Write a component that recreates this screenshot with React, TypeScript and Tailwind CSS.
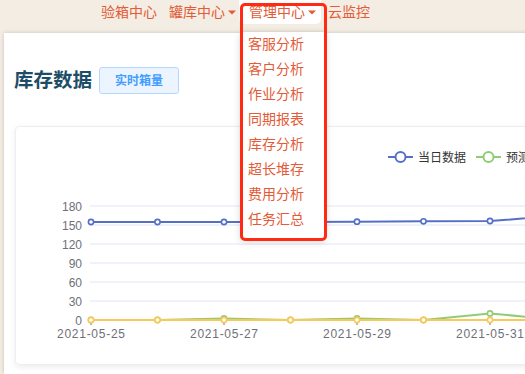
import React from 'react'

const menu = ['客服分析', '客户分析', '作业分析', '同期报表', '库存分析', '超长堆存', '费用分析', '任务汇总']

const xs = [91, 157.5, 224, 290.5, 357, 423.5, 490, 556.5]
const blue = [222, 222, 222, 222, 221.7, 221.3, 221, 216]
const green = [320, 320, 318.5, 320, 318.5, 320, 313.5, 319.5]
const yellow = [320, 320, 320, 320, 320, 320, 320, 320]

const grid = [
  { v: '180', y: 206 },
  { v: '150', y: 225 },
  { v: '120', y: 244 },
  { v: '90', y: 263 },
  { v: '60', y: 282 },
  { v: '30', y: 301 },
  { v: '0', y: 320 },
]

function Caret() {
  return (
    <svg width="8" height="5" viewBox="0 0 8 5" className="ml-[3px]">
      <path d="M0 0.5h8L4 4.5z" fill="currentColor" />
    </svg>
  )
}

function Series({ ys, color }: { ys: number[]; color: string }) {
  const pts = xs.map((x, i) => `${x},${ys[i]}`).join(' ')
  return (
    <g>
      <polyline points={pts} fill="none" stroke={color} strokeWidth={2} />
      {xs.map((x, i) => (
        <circle key={i} cx={x} cy={ys[i]} r={2.6} fill="#fff" stroke={color} strokeWidth={1.6} />
      ))}
    </g>
  )
}

function Chart() {
  return (
    <svg width="560" height="237" viewBox="16 127 560 237" className="block">
      {/* legend */}
      <line x1="388" y1="157" x2="413" y2="157" stroke="#5470c6" strokeWidth={2} />
      <circle cx="400.5" cy="157" r="5" fill="#fff" stroke="#5470c6" strokeWidth={2} />
      <text x="418" y="161.5" fontSize="12" fill="#333">当日数据</text>
      <line x1="476" y1="157" x2="501" y2="157" stroke="#91cc75" strokeWidth={2} />
      <circle cx="488.5" cy="157" r="5" fill="#fff" stroke="#91cc75" strokeWidth={2} />
      <text x="506" y="161.5" fontSize="12" fill="#333">预测数据</text>

      {grid.map((g) => (
        <g key={g.v}>
          <line x1="90" y1={g.y} x2="576" y2={g.y} stroke={g.v === '0' ? '#6e7079' : '#e0e6f1'} strokeWidth={1} />
          <text x="82" y={g.y + 4.5} fontSize="12" fill="#6e7079" textAnchor="end">{g.v}</text>
        </g>
      ))}

      {[91, 224, 357, 490].map((x, i) => (
        <g key={x}>
          <line x1={x} y1="320" x2={x} y2="325" stroke="#6e7079" strokeWidth={1} />
          <text x={x - 34} y="337.5" fontSize="12" fill="#6e7079" textLength="68" lengthAdjust="spacing">
            {['2021-05-25', '2021-05-27', '2021-05-29', '2021-05-31'][i]}
          </text>
        </g>
      ))}

      <Series ys={green} color="#91cc75" />
      <Series ys={blue} color="#5470c6" />
      <Series ys={yellow} color="#fac858" />
    </svg>
  )
}

export default function App() {
  return (
    <div className="relative h-[374px] w-[525px] overflow-hidden bg-[#f3ede3] font-['Liberation_Sans','Noto_Sans_CJK_SC',sans-serif]">
      <nav className="flex h-[33px] items-start pl-[101px] text-[14px] text-[#e35b37]">
        <span className="flex h-[24px] items-center">验箱中心</span>
        <span className="ml-[12px] flex h-[24px] items-center">
          罐库中心
          <Caret />
        </span>
        <span className="ml-[3px] flex h-[24px] items-center rounded-b-[5px] bg-white pl-[10px] pr-[5px]">
          管理中心
          <Caret />
        </span>
        <span className="ml-[7px] flex h-[24px] items-center">云监控</span>
      </nav>

      <main className="ml-[4px] h-[341px] w-[600px] bg-white px-[11px] pt-[34px] shadow-[0_0_4px_rgba(0,0,0,0.18)]">
        <div className="flex items-center">
          <h1 className="-ml-[1px] text-[19.5px] font-bold leading-[27px] text-[#1d4d66]">库存数据</h1>
          <span className="ml-[7px] flex h-[27px] w-[80px] items-center justify-center rounded-[3px] border border-[#b3d8ff] bg-[#ecf5ff] text-[12px] font-bold text-[#409eff]">
            实时箱量
          </span>
        </div>
        <div className="mt-[32px] h-[239px] w-[570px] overflow-hidden rounded-[4px] border border-[#ebeef5] shadow-[0_2px_6px_rgba(0,0,0,0.08)]">
          <Chart />
        </div>
      </main>

      <ul className="absolute left-[241px] top-[32px] h-[207px] w-[84px] bg-white pl-[7px] shadow-[0_2px_8px_rgba(0,0,0,0.18)]">
        {menu.map((m) => (
          <li key={m} className="flex h-[25px] items-center text-[14px] text-[#e35b37]">
            {m}
          </li>
        ))}
      </ul>

      <div className="absolute left-[240px] top-[3px] h-[238px] w-[87px] rounded-[5px] border-[3px] border-[#ff2a12]" />
    </div>
  )
}
